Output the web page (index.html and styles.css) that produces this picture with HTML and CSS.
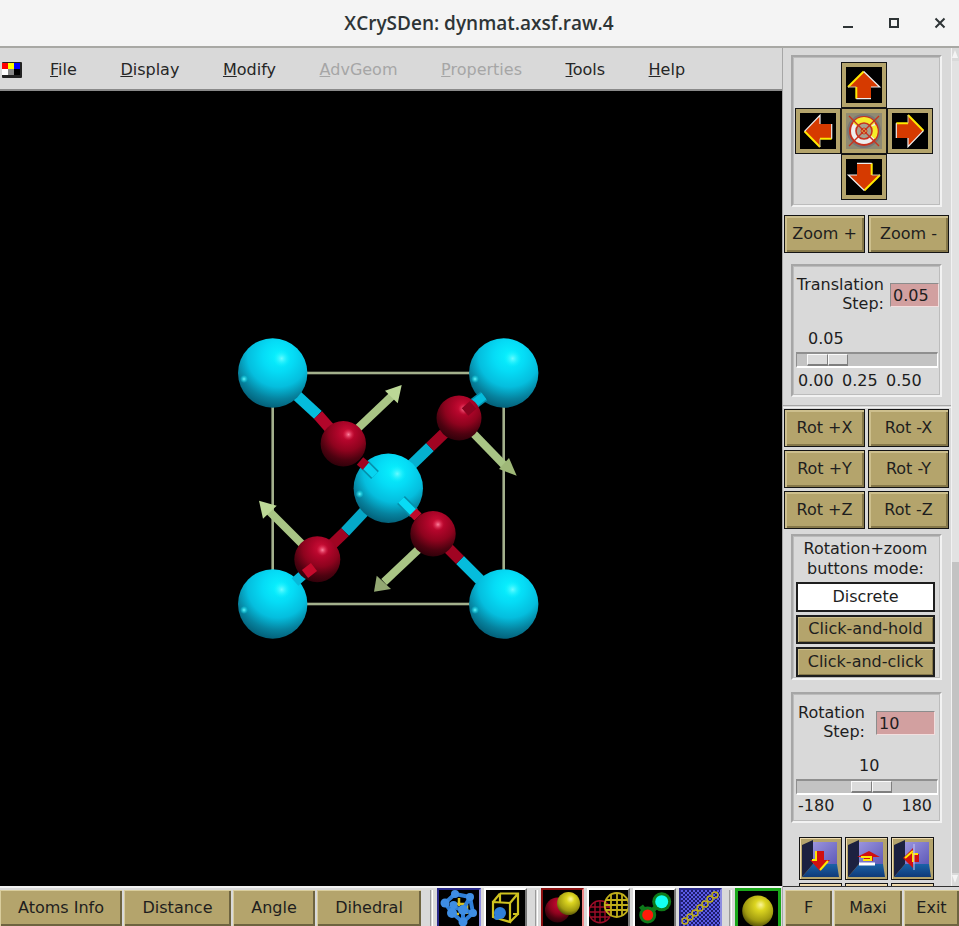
FILE: index.html
```html
<!DOCTYPE html>
<html lang="en">
<head>
<meta charset="utf-8">
<title>XCrySDen: dynmat.axsf.raw.4</title>
<link rel="stylesheet" href="styles.css">
</head>
<body>
<svg class="defs" width="0" height="0" aria-hidden="true">
  <defs>
    <radialGradient id="cy" cx="0.58" cy="0.26" r="0.88">
      <stop offset="0" stop-color="#08f2ff"/><stop offset="0.25" stop-color="#05dcf6"/><stop offset="0.5" stop-color="#05bede"/><stop offset="0.7" stop-color="#06829e"/><stop offset="0.88" stop-color="#035a72"/><stop offset="1" stop-color="#024a60"/>
    </radialGradient>
    <radialGradient id="rd" cx="0.58" cy="0.26" r="0.88">
      <stop offset="0" stop-color="#d01038"/><stop offset="0.22" stop-color="#b0052a"/><stop offset="0.45" stop-color="#8e031e"/><stop offset="0.68" stop-color="#4e0210"/><stop offset="1" stop-color="#180005"/>
    </radialGradient>
    <radialGradient id="ye" cx="0.55" cy="0.35" r="0.7" fx="0.6" fy="0.3">
      <stop offset="0" stop-color="#fbf59a"/><stop offset="0.25" stop-color="#dcd520"/><stop offset="0.7" stop-color="#a09a10"/><stop offset="1" stop-color="#454205"/>
    </radialGradient>
    <radialGradient id="hlc"><stop offset="0" stop-color="#6ffbff" stop-opacity=".95"/><stop offset="1" stop-color="#06f0ff" stop-opacity="0"/></radialGradient>
    <radialGradient id="hlr"><stop offset="0" stop-color="#ff8aa5" stop-opacity=".95"/><stop offset="1" stop-color="#e0204a" stop-opacity="0"/></radialGradient>
    <linearGradient id="wall" x1="0" y1="0" x2="1" y2="1"><stop offset="0" stop-color="#9a94de"/><stop offset="1" stop-color="#5f5ab8"/></linearGradient>
    <linearGradient id="floor" x1="0" y1="0" x2="0" y2="1"><stop offset="0" stop-color="#1a62a8"/><stop offset="1" stop-color="#0f3a78"/></linearGradient>
    <pattern id="check" width="4" height="4" patternUnits="userSpaceOnUse"><rect width="4" height="4" fill="#1c1c6c"/><rect width="2" height="2" fill="#5a5ae6"/><rect x="2" y="2" width="2" height="2" fill="#5a5ae6"/></pattern>
    <symbol id="arrow" viewBox="0 0 46 46">
      <path d="M22.7 9.5 38.7 25H30V36.7H15.3V25H7Z" fill="#d63a00"/>
      <path d="M7 25 22.7 9.5M15.3 25V36.7" stroke="#ffe800" stroke-width="2" fill="none"/>
      <path d="M7 25H15.3" stroke="#c9c2a0" stroke-width="1" fill="none"/>
      <path d="M22.7 9.5 38.7 25H30M30 36.7H15.3" stroke="#eee" stroke-width="1.2" fill="none"/>
    </symbol>
    <symbol id="room" viewBox="0 0 37 37">
      <rect width="37" height="37" fill="#b4a46c"/>
      <path d="M11 2H35V24H11Z" fill="url(#wall)"/>
      <path d="M11 24H35L37 37H0L11 24Z" fill="url(#floor)"/>
      <path d="M0 5 11 0V24L0 37Z" fill="#1c2140"/>
    </symbol>
  </defs>
</svg>

<header class="titlebar">
  <span class="title">XCrySDen: dynmat.axsf.raw.4</span>
  <span class="winbtns">
    <svg class="winico" viewBox="0 0 12 12"><path d="M1 10H11" stroke="#2e3436" stroke-width="2"/></svg>
    <svg class="winico" viewBox="0 0 12 12"><rect x="2" y="2" width="8" height="8" fill="none" stroke="#2e3436" stroke-width="2"/></svg>
    <svg class="winico" viewBox="0 0 12 12"><path d="M1.5 1.5 10.5 10.5M10.5 1.5 1.5 10.5" stroke="#2e3436" stroke-width="2"/></svg>
  </span>
</header>

<div class="app">
  <div class="left">
    <nav class="menubar">
      <svg class="appicon" viewBox="0 0 20 16">
        <rect width="20" height="16" fill="#222" rx="1"/>
        <rect x="0" y="1" width="6" height="6" fill="#f00"/><rect x="6" y="1" width="6" height="6" fill="#ff0"/><rect x="12" y="1" width="6" height="6" fill="#00f"/>
        <rect x="0" y="7" width="6" height="6" fill="#fff"/><rect x="6" y="7" width="6" height="6" fill="#888"/><rect x="12" y="7" width="6" height="6" fill="#000"/>
      </svg>
      <span class="menus">
        <span class="menu"><u>F</u>ile</span>
        <span class="menu"><u>D</u>isplay</span>
        <span class="menu"><u>M</u>odify</span>
        <span class="menu off"><u>A</u>dvGeom</span>
        <span class="menu off"><u>P</u>roperties</span>
        <span class="menu"><u>T</u>ools</span>
        <span class="menu"><u>H</u>elp</span>
      </span>
    </nav>

    <main class="canvas">
      <svg class="scene" width="783" height="795" viewBox="0 91 783 795">
        <rect x="272.7" y="373" width="231" height="231" fill="none" stroke="#a3b08c" stroke-width="2.6"/>
        <g stroke="#a9c585" stroke-width="8">
          <path d="M355 431 393 395"/>
          <path d="M473 433 505 466"/>
          <path d="M303 545 269 511"/>
          <path d="M420 548 384 582"/>
        </g>
        <g fill="#bcd896">
          <path d="M401.7 385 385 390.7 397.7 403.3Z"/>
          <path d="M516.7 475.7 499 469 509 458Z" fill="#9fb878"/>
          <path d="M259 500.7 276.7 505.7 263 518.7Z"/>
          <path d="M374 591.7 391 589 376.7 575.7Z" fill="#93a873"/>
        </g>
        <g class="bonds" stroke-width="11">
          <path d="M280 380 318 415" stroke="#05bcdc"/>
          <path d="M318 415 340 440" stroke="#b2062a"/>
          <path d="M497 597 460 560" stroke="#05bcdc"/>
          <path d="M460 560 435 535" stroke="#a00422"/>
          <path d="M375 500 345 532" stroke="#05a8c8"/>
          <path d="M345 532 318 558" stroke="#a00422"/>
          <path d="M400 476 430 447" stroke="#05b0d0"/>
          <path d="M430 447 458 420" stroke="#a00422"/>
        </g>
        <circle cx="272.7" cy="373" r="34.7" fill="url(#cy)"/>
        <circle cx="503.7" cy="373" r="34.7" fill="url(#cy)"/>
        <circle cx="272.7" cy="604" r="34.7" fill="url(#cy)"/>
        <circle cx="503.7" cy="604" r="34.7" fill="url(#cy)"/>
        <circle cx="388.3" cy="488.3" r="34.7" fill="url(#cy)"/>
        <g fill="url(#hlc)">
          <circle cx="281.7" cy="358.5" r="9"/><circle cx="512.7" cy="358.5" r="9"/><circle cx="281.7" cy="589.5" r="9"/><circle cx="512.7" cy="589.5" r="9"/><circle cx="397.3" cy="473.8" r="9"/>
          <circle cx="244" cy="379" r="4"/><circle cx="475" cy="379" r="4"/><circle cx="244" cy="610" r="4"/><circle cx="475" cy="610" r="4"/><circle cx="359.6" cy="494" r="4"/>
        </g>
        <g class="bonds">
          <path d="M365 465 375 475" stroke="#0590ac" stroke-width="11"/>
          <path d="M365 465 375 475" stroke="#08d4f0" stroke-width="8"/>
          <path d="M414 513 401 500" stroke="#0590ac" stroke-width="11"/>
          <path d="M414 513 401 500" stroke="#08dcf6" stroke-width="8"/>
          <path d="M472 405 484 396" stroke="#0590ac" stroke-width="11"/>
          <path d="M472 405 484 396" stroke="#05bcdc" stroke-width="8"/>
          <path d="M305 573 295 582" stroke="#08b8d8" stroke-width="10"/>
        </g>
        <g class="bonds" stroke-width="10">
          <path d="M360 461 366 466" stroke="#a00422"/>
          <path d="M418 517 413 512" stroke="#c00a2c"/>
        </g>
        <circle cx="343.3" cy="443.7" r="22.7" fill="url(#rd)"/>
        <circle cx="459" cy="418" r="22.5" fill="url(#rd)"/>
        <circle cx="317.3" cy="559.3" r="23" fill="url(#rd)"/>
        <circle cx="433" cy="533.7" r="22.7" fill="url(#rd)"/>
        <g fill="url(#hlr)">
          <circle cx="348.5" cy="434.5" r="6"/><circle cx="464" cy="409" r="6"/><circle cx="322.5" cy="550" r="6"/><circle cx="438" cy="524.5" r="6"/>
        </g>
        <g class="bonds" stroke-width="10">
          <path d="M465 412 473 405" stroke="#8a0320"/>
          <path d="M314 567 305 574" stroke="#c40a2c"/>
        </g>
      </svg>
    </main>

    <footer class="toolbar">
      <button class="btn tool w122">Atoms Info</button>
      <button class="btn tool w106">Distance</button>
      <button class="btn tool w81">Angle</button>
      <button class="btn tool w104">Dihedral</button>
      <span class="sep sep-a"></span>
      <span class="ib ib-blue ib-first">
        <svg viewBox="0 0 40 38" width="40" height="38">
          <g stroke="#d8c020" stroke-width="2.5"><path d="M14 14H26M20 8V16M10 24H20M28 15V24"/></g>
          <g stroke="#2f7fd8" stroke-width="4" fill="none"><path d="M16 4 31 7 34 23 24 32 13 23 6 13ZM14.5 17 24 20 31 7M24 20 24 32M14.5 17 13 23M24 20 34 23"/></g>
          <g fill="#3f8ee4"><circle cx="16" cy="4" r="4"/><circle cx="31" cy="7" r="4"/><circle cx="6" cy="13" r="4.5"/><circle cx="24" cy="20" r="5"/><circle cx="13" cy="23" r="5"/><circle cx="34" cy="23" r="4"/><circle cx="24" cy="32" r="4.5"/><circle cx="14.5" cy="15" r="4"/></g>
        </svg>
      </span>
      <span class="ib ib-white">
        <svg viewBox="0 0 39 38" width="39" height="38">
          <g fill="none" stroke="#cfc21f" stroke-width="2.2"><path d="M14 3.5H32V24H27M14 3.5 7 12M14 3.5V12M32 3.5 24 13M32 24 24 32"/><path d="M7 12 24 13V32L7 27Z"/></g>
          <circle cx="14" cy="23" r="6" fill="#2f7fd8"/><circle cx="11" cy="27" r="3" fill="#2f7fd8"/>
        </svg>
      </span>
      <span class="sep sep-b"></span>
      <span class="ib ib-red">
        <svg viewBox="0 0 39 38" width="39" height="38"><circle cx="14.5" cy="20" r="12.5" fill="url(#rd)"/><circle cx="25.5" cy="13.5" r="11.5" fill="url(#ye)"/></svg>
      </span>
      <span class="ib ib-white">
        <svg viewBox="0 0 39 38" width="39" height="38">
          <g fill="none" stroke="#9c0c28" stroke-width="1.4"><circle cx="11" cy="21.7" r="11"/><path d="M1 17H21M0 22H22M2 27H20M6 12V32M11 11V33M16 12V32"/></g>
          <g fill="none" stroke="#c0ae1a" stroke-width="1.8"><circle cx="27.7" cy="15" r="12"/><path d="M17 10H38M16 15H39M17 20H38M22 4V26M28 3V27M33 4V26"/></g>
        </svg>
      </span>
      <span class="ib ib-white">
        <svg viewBox="0 0 39 38" width="39" height="38">
          <circle cx="12.7" cy="25" r="8.5" fill="#0e7a1a"/><circle cx="26.7" cy="11.7" r="9.5" fill="#0e7a1a"/>
          <path d="M12.7 25 26.7 11.7M6 16 12 24" stroke="#0e7a1a" stroke-width="5"/>
          <circle cx="12.7" cy="25" r="5.5" fill="#ff1a0a"/><circle cx="26.7" cy="11.7" r="6.5" fill="#14fff0"/>
        </svg>
      </span>
      <span class="ib ib-blue">
        <svg viewBox="0 0 39 38" width="39" height="38">
          <rect width="39" height="38" fill="url(#check)"/>
          <g fill="none" stroke="#c0ae1a" stroke-width="1.4"><circle cx="4" cy="31" r="3"/><circle cx="9" cy="27" r="3"/><circle cx="14" cy="23" r="3"/><circle cx="19" cy="18" r="3"/><circle cx="24" cy="14" r="3"/><circle cx="29" cy="9" r="3"/><circle cx="34" cy="5" r="3"/></g>
        </svg>
      </span>
      <span class="sep sep-c"></span>
      <span class="ib ib-green">
        <svg viewBox="0 0 40 38" width="40" height="38"><rect width="40" height="38" fill="#000"/><circle cx="19.7" cy="20" r="15.5" fill="url(#ye)"/></svg>
      </span>
    </footer>
  </div>

  <aside class="side">
    <div class="side-body">
      <div class="side-col">
        <section class="frame pad-frame">
          <div class="pad">
            <span class="cell c-up"><button class="pad-btn"><svg viewBox="0 0 46 46" class="pad-ico"><use href="#arrow" width="46" height="46"/></svg></button></span>
            <span class="cell c-left"><button class="pad-btn"><svg viewBox="0 0 46 46" class="pad-ico"><use href="#arrow" width="46" height="46" transform="rotate(-90 23 23)"/></svg></button></span>
            <span class="cell c-mid"><button class="pad-btn mid"><svg viewBox="0 0 36 36" class="pad-ico">
              <rect width="36" height="36" fill="#8f8a72"/>
              <circle cx="18" cy="18" r="17" fill="#777"/>
              <circle cx="18" cy="18" r="14" fill="#eee" stroke="#c8321e" stroke-width="2"/>
              <path d="M7 10A13 13 0 0 1 29 10L24 14A7 7 0 0 0 12 14Z" fill="#f6ec2a"/>
              <path d="M30 12A13 13 0 0 1 29 26L24 22A7 7 0 0 0 24 14Z" fill="#f6ec2a"/>
              <circle cx="18" cy="18" r="8" fill="#a8a290" stroke="#c8321e" stroke-width="1.6"/>
              <circle cx="18" cy="18" r="3" fill="#e6dc60" stroke="#c8321e" stroke-width="1"/>
              <path d="M3 3 33 33M33 3 3 33" stroke="#c8321e" stroke-width="1.4"/>
            </svg></button></span>
            <span class="cell c-right"><button class="pad-btn"><svg viewBox="0 0 46 46" class="pad-ico"><use href="#arrow" width="46" height="46" transform="rotate(90 23 23)"/></svg></button></span>
            <span class="cell c-down"><button class="pad-btn"><svg viewBox="0 0 46 46" class="pad-ico"><use href="#arrow" width="46" height="46" transform="rotate(180 23 23)"/></svg></button></span>
          </div>
        </section>

        <div class="pair zoom-row">
          <button class="btn big">Zoom +</button>
          <button class="btn big">Zoom -</button>
        </div>

        <section class="frame trans-frame">
          <div class="field-row">
            <label class="lab lab-t">Translation<br>Step:</label>
            <span class="entry entry-t">0.05</span>
          </div>
          <div class="val val-t">0.05</div>
          <div class="slider slider-t"><span class="thumb"><i></i><i></i></span></div>
          <div class="scale scale-t"><span>0.00</span><span>0.25</span><span>0.50</span></div>
        </section>

        <hr class="rule">

        <div class="rot-grid">
          <button class="btn">Rot +X</button><button class="btn">Rot -X</button>
          <button class="btn">Rot +Y</button><button class="btn">Rot -Y</button>
          <button class="btn">Rot +Z</button><button class="btn">Rot -Z</button>
        </div>

        <section class="frame mode-frame">
          <div class="mode-title">Rotation+zoom<br>buttons mode:</div>
          <button class="btn mode selected">Discrete</button>
          <button class="btn mode">Click-and-hold</button>
          <button class="btn mode">Click-and-click</button>
        </section>

        <section class="frame rot-frame">
          <div class="field-row rot-row">
            <label class="lab lab-r">Rotation<br>Step:</label>
            <span class="entry entry-r">10</span>
          </div>
          <div class="val val-r">10</div>
          <div class="slider slider-r"><span class="thumb"><i></i><i></i></span></div>
          <div class="scale scale-r"><span>-180</span><span>0</span><span>180</span></div>
        </section>

        <div class="views">
          <button class="view"><svg viewBox="0 0 37 37" class="view-ico"><use href="#room" width="37" height="37"/><path d="M13 11H22V20H28L18 31 8 20H13Z" fill="#d01010"/><path d="M14 11V20H10M18 30 26 21" stroke="#ffe800" stroke-width="2" fill="none"/></svg></button>
          <button class="view"><svg viewBox="0 0 37 37" class="view-ico"><use href="#room" width="37" height="37"/><path d="M9 17 21 11 32 17H25V21H16V17Z" fill="#d01010"/><path d="M13 17H23V20H15" stroke="#ffe800" stroke-width="2" fill="none"/><path d="M11 24H27" stroke="#fff" stroke-width="3"/></svg></button>
          <button class="view"><svg viewBox="0 0 37 37" class="view-ico"><use href="#room" width="37" height="37"/><path d="M9 18 19 8V14H25V22H19V28Z" fill="#d01010"/><path d="M11 18 19 11M19 22V14H24" stroke="#ffe800" stroke-width="2" fill="none"/><path d="M20 4V30" stroke="#c9c6f0" stroke-width="1"/></svg></button>
          <button class="view stub"></button><button class="view stub"></button><button class="view stub"></button>
        </div>
      </div>
      <div class="scrollbar">
        <span class="sb-arrow sb-up"></span>
        <span class="sb-thumb"></span>
        <span class="sb-track"></span>
        <span class="sb-arrow sb-down"></span>
      </div>
    </div>
    <div class="actions">
      <button class="btn tool w47">F</button>
      <button class="btn tool w68">Maxi</button>
      <button class="btn tool w55">Exit</button>
    </div>
  </aside>
</div>
</body>
</html>
```

FILE: styles.css
```css
* { box-sizing: border-box; }
html, body { margin: 0; height: 100%; }
body {
  width: 959px; height: 926px; overflow: hidden;
  display: flex; flex-direction: column;
  font: 16px/20px "DejaVu Sans", sans-serif;
  color: #1e1e1e; background: #d9d9d9;
}
.defs { position: absolute; }
button { font: inherit; color: inherit; padding: 0; margin: 0; }

.titlebar {
  height: 48px; flex: none; position: relative;
  background: #f4f4f4; border-bottom: 2px solid #a8a8a4;
  display: flex; align-items: center; justify-content: center;
}
.title { font: 600 19px/24px "Open Sans", sans-serif; color: #2e3436; margin-left: -1px; }
.winbtns { position: absolute; right: 13px; top: 17px; display: flex; gap: 34px; }
.winico { width: 12px; height: 12px; display: block; }

.app { flex: 1; display: flex; min-height: 0; }
.left { width: 783px; flex: none; display: flex; flex-direction: column; border-right: 1px solid #a6a6a6; }

.menubar {
  height: 43px; flex: none; display: flex; align-items: center;
  background: #d9d9d9; border-bottom: 2px solid #8a8a8a; padding: 2px 0 0 2px;
}
.appicon { width: 20px; height: 16px; flex: none; margin-right: 28px; }
.menus { display: flex; gap: 43.6px; }
.menu { color: #262626; }
.menu.off { color: #a6a6a6; }

.canvas { flex: 1; background: #000; min-height: 0; overflow: hidden; }
.scene { display: block; }
.bonds path { fill: none; }

.btn {
  display: flex; align-items: center; justify-content: center;
  background: #b4a46c; border: 1px solid #141414;
  box-shadow: inset 2px 2px 0 #cdbf8d, inset -2px -2px 0 #857749;
}

.toolbar {
  height: 40px; flex: none; display: flex; align-items: flex-start;
  background: #d9d9d9; border-top: 2px solid #f2f2f2;
  padding-top: 2px;
}
.tool {
  height: 36px; flex: none; border: 0;
  box-shadow: inset 1px 1px 0 #d9cd9d, inset -2px -2px 0 #6e6440;
  margin-right: 2px;
}
.w122 { width: 122px; }
.w106 { width: 107px; }
.w81 { width: 82px; }
.w104 { width: 104px; margin-right: 0; }
.w47 { width: 47px; }
.w68 { width: 68px; }
.w55 { width: 55px; margin-right: 0; }

.sep { width: 3px; height: 36px; flex: none; border-left: 1px solid #9a9a9a; border-right: 1px solid #fff; }
.sep-a { margin: 0 4px 0 9px; }
.sep-b { margin: 0 3px 0 5px; }
.sep-c { margin: 0 3px 0 4px; }

.ib {
  width: 43px; height: 38px; flex: none; margin: -2px 3px 0 0; overflow: hidden;
  border: 2px solid #fff; border-bottom: 0; background: #000;
  display: flex; justify-content: center;
}
.ib-first { width: 44px; }
.ib-blue { border-color: #2a2a8c; border-right-color: #8c8ce0; border-bottom-color: #8c8ce0; }
.ib-white { border-top-color: #fff; border-left-color: #fff; border-right-color: #777; }
.ib-red { border-color: #8c1010; border-right-color: #e88; }
.ib-green { border-color: #1aa81a; width: 46px; border-width: 3px; border-bottom: 0; margin-right: 0; }

.side { flex: 1; display: flex; flex-direction: column; min-width: 0; }
.side-body { flex: 1; display: flex; overflow: hidden; min-height: 0; background: #d9d9d9; }
.side-col { width: 168px; flex: none; padding: 7px 0 0 1px; }
.scrollbar {
  width: 8px; flex: none; display: flex; flex-direction: column;
  border-left: 1px solid #f2f2f2; background: #c3c3c3;
}
.sb-arrow { height: 13px; flex: none; background: #d9d9d9; position: relative; }
.sb-arrow::after {
  content: ""; position: absolute; left: 0; border-left: 3px solid transparent; border-right: 3px solid transparent;
}
.sb-up::after { top: 2px; border-bottom: 8px solid #f4f4f4; }
.sb-down::after { top: 2px; border-top: 8px solid #f4f4f4; }
.sb-thumb { height: 501px; flex: none; background: #e2e2e2; }
.sb-track { flex: 1; }

.frame {
  margin-left: 7px; width: 151px; background: #d9d9d9;
  border: 2px solid; border-color: #a6a6a6 #f2f2f2 #f2f2f2 #a6a6a6;
  outline: 1px solid #bcbcbc; outline-offset: -3px;
}
.pad-frame { height: 152px; padding: 5px 2px; }
.pad { display: grid; grid-template: repeat(3, 46px) / repeat(3, 46px); }
.cell { display: block; width: 46px; height: 46px; }
.c-up { grid-area: 1 / 2; }
.c-left { grid-area: 2 / 1; }
.c-mid { grid-area: 2 / 2; }
.c-right { grid-area: 2 / 3; }
.c-down { grid-area: 3 / 2; }
.pad-btn {
  display: block; width: 46px; height: 46px; background: #000;
  border: 1px solid #141414; outline: 4px solid #b4a46c; outline-offset: -5px;
  box-shadow: inset 0 0 0 1px #cdbf8d;
}
.pad-btn.mid { background: #b4a46c; }
.pad-ico { display: block; width: 46px; height: 46px; margin: -1px; }
.pad-btn.mid .pad-ico { width: 36px; height: 36px; margin: 4px; }

.pair { display: grid; grid-template-columns: 81px 81px; gap: 3px; margin-top: 8px; height: 38px; }

.trans-frame { height: 133px; margin-top: 11px; }
.field-row { display: flex; align-items: flex-start; }
.lab { display: block; text-align: right; line-height: 19px; flex: none; }
.lab-t { width: 91px; margin-top: 9px; margin-right: 6px; }
.lab-r { width: 72px; margin-top: 9px; margin-right: 11px; }
.entry {
  display: block; height: 24px; background: #d2a0a0; line-height: 23px; padding-left: 2px;
  border: 1px solid; border-color: #8c8c8c #f2dede #f2dede #8c8c8c; flex: none;
}
.entry-t { width: 49px; margin-top: 17px; }
.entry-r { width: 59px; margin-top: 17px; }
.val { line-height: 20px; }
.val-t { margin-top: 16px; padding-left: 15px; }
.val-r { margin-top: 16px; padding-left: 66px; }
.slider {
  width: 142px; height: 16px; margin: 3px 0 0 3px;
  background: #c3c3c3; display: flex; align-items: stretch;
  border-top: 2px solid #8f8f8f; border-left: 1px solid #8f8f8f;
  border-bottom: 2px solid #fff; border-right: 1px solid #fff;
}
.thumb { display: flex; width: 41px; flex: none; }
.slider-t .thumb { margin-left: 10px; }
.slider-r .thumb { margin-left: 54px; }
.thumb i {
  flex: 1; background: #dcdcdc;
  border: 1px solid; border-color: #fafafa #7f7f7f #7f7f7f #fafafa; border-width: 1px 1px 2px 1px;
}
.scale { display: flex; line-height: 20px; }
.scale-t { gap: 8.4px; padding-left: 5px; margin-top: 3px; }
.scale-r { padding-left: 5px; margin-top: 1px; }
.scale-r span:nth-child(2) { margin-left: 28px; }
.scale-r span:nth-child(3) { margin-left: 29px; }

.rule { margin: 8px 0 0 -1px; height: 3px; border: 0; border-top: 1px solid #a6a6a6; border-bottom: 1px solid #f2f2f2; }
.rot-grid { display: grid; grid-template-columns: 81px 81px; grid-auto-rows: 38px; gap: 3px; margin-top: 1px; }

.mode-frame { height: 146px; margin-top: 5px; padding-top: 3px; }
.mode-title { text-align: center; margin: 0 2px 3px 0; }
.mode { width: 139px; height: 29.5px; margin: 0 0 3px 3px; border: 2px solid #1e1e1e; box-shadow: inset 1px 1px 0 #cdbf8d, inset -1px -1px 0 #857749; }
.mode.selected { background: #fff; box-shadow: none; }

.rot-frame { height: 131px; margin-top: 12px; }
.rot-row { height: 46px; }

.views { display: grid; grid-template-columns: repeat(3, 43px); grid-auto-rows: 43px; gap: 3px; margin: 14px 0 0 15px; }
.view {
  background: #b4a46c; border: 1px solid #141414; padding: 2px;
  box-shadow: inset 1px 1px 0 #f0dcb0; display: block;
}
.view.stub { background: #f0d8a8; }
.view-ico { display: block; width: 37px; height: 37px; }

.actions {
  height: 40px; flex: none; display: flex; align-items: flex-start;
  background: #d9d9d9; border-top: 1px solid #333; padding: 3px 0 0 2px;
}
```
